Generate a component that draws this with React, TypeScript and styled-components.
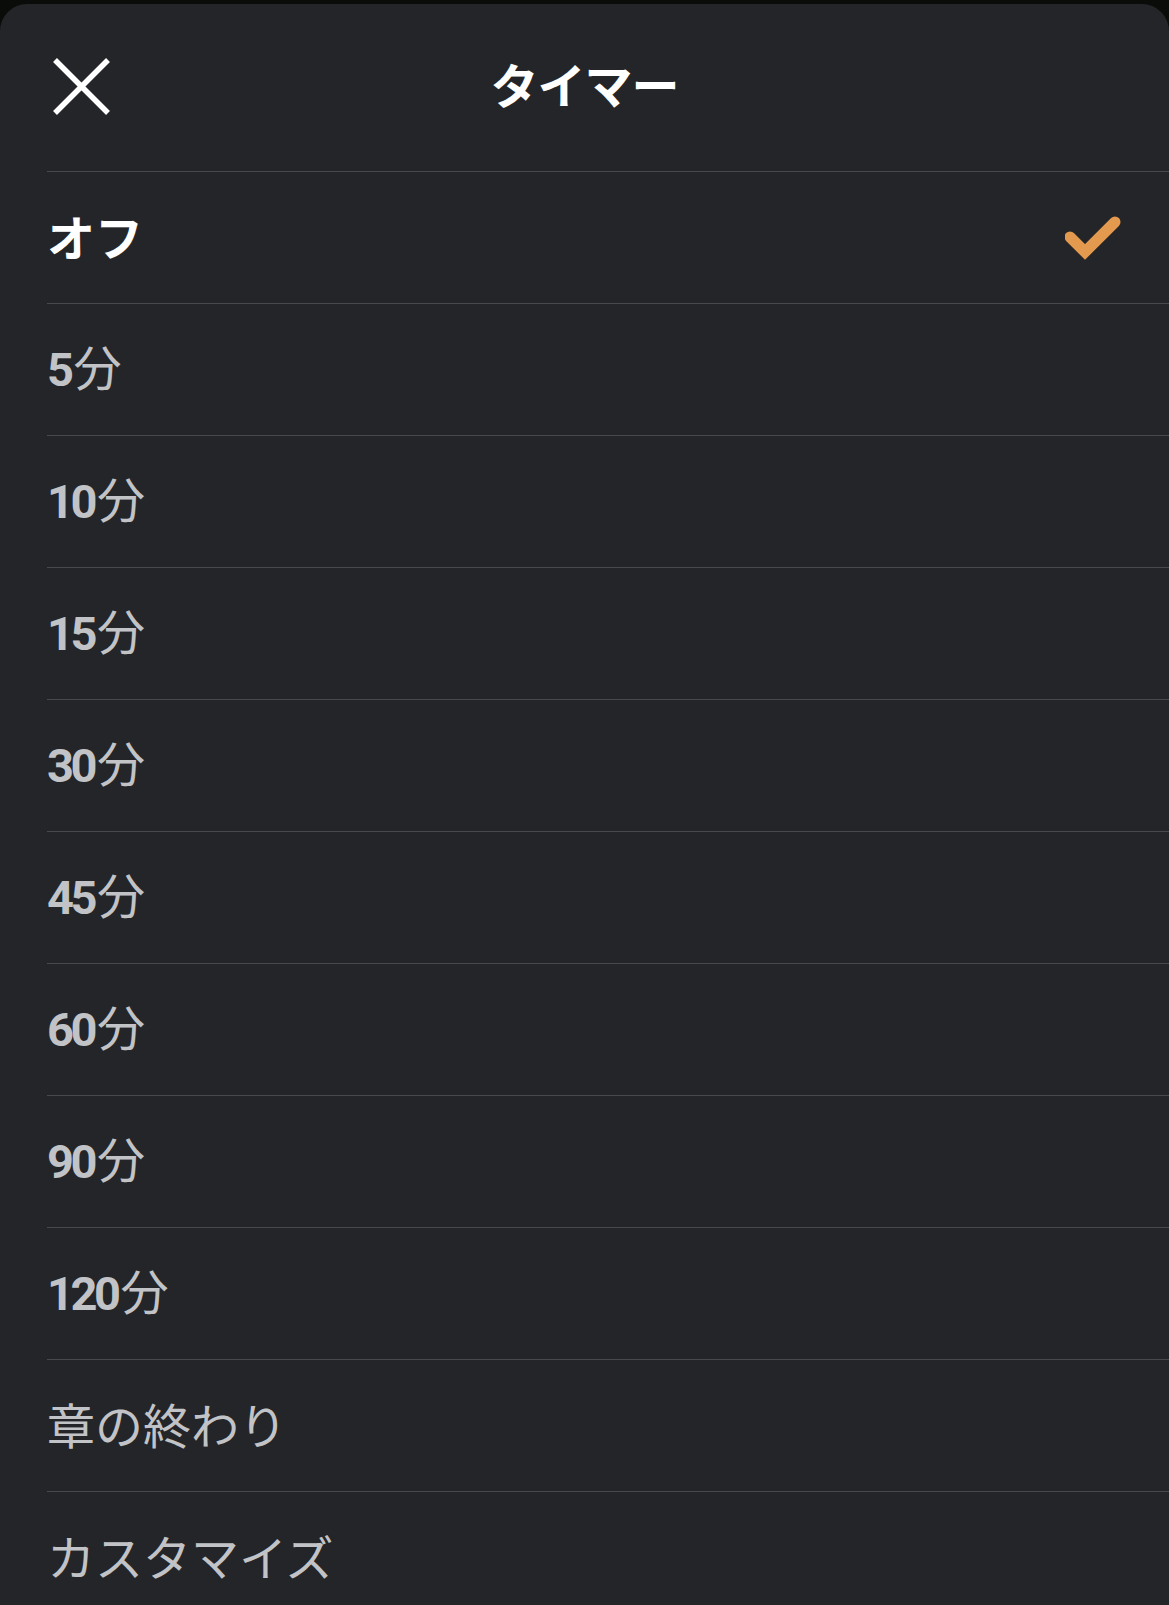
import React from "react";
import styled, { createGlobalStyle } from "styled-components";

const GlobalStyle = createGlobalStyle`
  html, body {
    margin: 0;
    padding: 0;
    background: #0a0c0a;
  }
  * { box-sizing: border-box; }
`;

const Sheet = styled.div`
  margin-top: 4px;
  min-height: 1601px;
  background: #242528;
  border-radius: 27px 27px 0 0;
  overflow: hidden;
  font-family: "Noto Sans CJK JP", "Noto Sans", sans-serif;
`;

const Header = styled.header`
  height: 167px;
  display: grid;
  grid-template-columns: 1fr auto 1fr;
  align-items: center;
  padding: 0 53px 2px;
`;

const CloseButton = styled.button`
  justify-self: start;
  width: 57px;
  height: 57px;
  padding: 0;
  border: 0;
  background: transparent;
  display: flex;
  align-items: center;
  justify-content: center;
  cursor: pointer;
`;

const Title = styled.h1`
  margin: 0 0 8px;
  font-size: 48px;
  font-weight: 700;
  color: #ffffff;
  line-height: 1;
  letter-spacing: -1px;
`;

const List = styled.ul`
  list-style: none;
  margin: 0;
  padding: 0 0 0 47px;
`;

const Row = styled.li`
  height: 132px;
  border-top: 1px solid #48494c;
  display: flex;
  align-items: center;
  justify-content: space-between;
  padding: 0 48px 5px 0;
`;

const Label = styled.span<{ $selected?: boolean }>`
  font-size: 48px;
  line-height: 1;
  font-weight: ${(p) => (p.$selected ? 700 : 400)};
  color: ${(p) => (p.$selected ? "#ffffff" : "#c1c3c6")};
  display: inline-flex;
  align-items: baseline;
`;

const Num = styled.span`
  font-family: "Roboto", "Noto Sans", sans-serif;
  font-weight: 700;
  font-size: 47px;
  letter-spacing: -3.5px;
  margin-right: 3px;
`;

const CheckMark = styled.svg`
  margin-top: 5px;
`;

const Check = () => (
  <CheckMark width="56" height="44" viewBox="0 0 56 44" aria-hidden="true">
    <polyline
      points="5,21 20,36 50,6"
      fill="none"
      stroke="#E39A4E"
      strokeWidth="11"
      strokeLinecap="round"
      strokeLinejoin="miter"
    />
  </CheckMark>
);

const CloseIcon = () => (
  <svg width="57" height="57" viewBox="0 0 57 57" aria-hidden="true">
    <path d="M2 2 L55 55 M55 2 L2 55" stroke="#ffffff" strokeWidth="5.5" strokeLinecap="butt" />
  </svg>
);

type Item = { num?: string; text: string; selected?: boolean };

const items: Item[] = [
  { text: "オフ", selected: true },
  { num: "5", text: "分" },
  { num: "10", text: "分" },
  { num: "15", text: "分" },
  { num: "30", text: "分" },
  { num: "45", text: "分" },
  { num: "60", text: "分" },
  { num: "90", text: "分" },
  { num: "120", text: "分" },
  { text: "章の終わり" },
  { text: "カスタマイズ" },
];

export default function App() {
  return (
    <>
      <GlobalStyle />
      <Sheet>
        <Header>
          <CloseButton aria-label="閉じる">
            <CloseIcon />
          </CloseButton>
          <Title>タイマー</Title>
          <span />
        </Header>
        <List>
          {items.map((it, i) => (
            <Row key={i}>
              <Label $selected={it.selected}>
                {it.num && <Num>{it.num}</Num>}
                {it.text}
              </Label>
              {it.selected && <Check />}
            </Row>
          ))}
        </List>
      </Sheet>
    </>
  );
}
